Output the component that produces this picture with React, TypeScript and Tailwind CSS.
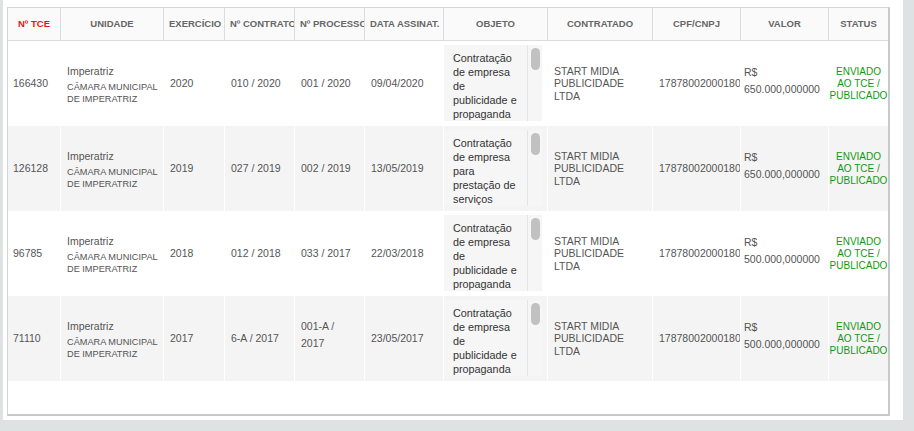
import React from "react";

const GRID =
  "grid grid-cols-[52px_103px_61px_70px_70px_79px_104px_105px_88px_88px_60px]";

const HEADERS = [
  "Nº TCE",
  "UNIDADE",
  "EXERCÍCIO",
  "Nº CONTRATO",
  "Nº PROCESSO",
  "DATA ASSINAT.",
  "OBJETO",
  "CONTRATADO",
  "CPF/CNPJ",
  "VALOR",
  "STATUS",
];

const ROWS = [
  {
    tce: "166430",
    ano: "2020",
    contrato: "010 / 2020",
    processo: "001 / 2020",
    data: "09/04/2020",
    objeto: "Contratação de empresa de publicidade e propaganda",
    valor: "R$ 650.000,000000",
  },
  {
    tce: "126128",
    ano: "2019",
    contrato: "027 / 2019",
    processo: "002 / 2019",
    data: "13/05/2019",
    objeto: "Contratação de empresa para prestação de serviços",
    valor: "R$ 650.000,000000",
  },
  {
    tce: "96785",
    ano: "2018",
    contrato: "012 / 2018",
    processo: "033 / 2017",
    data: "22/03/2018",
    objeto: "Contratação de empresa de publicidade e propaganda",
    valor: "R$ 500.000,000000",
  },
  {
    tce: "71110",
    ano: "2017",
    contrato: "6-A / 2017",
    processo: "001-A / 2017",
    data: "23/05/2017",
    objeto: "Contratação de empresa de publicidade e propaganda",
    valor: "R$ 500.000,000000",
  },
];

function Cell({ children, className = "" }: { children: React.ReactNode; className?: string }) {
  return (
    <div className={`flex items-center border-l border-white pl-[6px] pr-[4px] ${className}`}>
      {children}
    </div>
  );
}

export default function App() {
  return (
    <div
      className="flex h-[431px] w-[914px] bg-[#dee2e2] pb-[11px] pl-[3px] pr-[11px] text-[#555] antialiased"
      style={{ fontFamily: '"Liberation Sans", Arial, sans-serif' }}
    >
      <div className="flex-1 bg-white pl-[4px] pr-[13px] pt-[7px]">
        <div className="h-[409px] border-b-2 border-l border-r-2 border-t border-b-[#c9c9c9] border-l-[#d4d4d4] border-r-[#c9c9c9] border-t-[#d4d4d4]">
          {/* header */}
          <div className={`${GRID} h-[33px] border-b border-[#dcdcdc] bg-[#fafafa]`}>
            {HEADERS.map((h, i) => (
              <div
                key={h}
                className={[
                  "overflow-hidden whitespace-nowrap px-[5px] text-center text-[9.5px] font-bold leading-[32px]",
                  i === 0 ? "text-[#ee1111]" : "border-l border-[#dcdcdc] text-[#666]",
                ].join(" ")}
              >
                {h}
              </div>
            ))}
          </div>

          {/* rows */}
          {ROWS.map((r, i) => (
            <div
              key={r.tce}
              className={`${GRID} h-[85px] text-[10.5px] ${i % 2 === 1 ? "bg-[#f4f4f4]" : "bg-white"}`}
            >
              <div className="flex items-center pl-[5px]">{r.tce}</div>

              <Cell>
                <div>
                  <p className="leading-[17px]">Imperatriz</p>
                  <p className="mt-[1px] text-[9.2px] leading-[12px]">
                    CÂMARA MUNICIPAL
                    <br />
                    DE IMPERATRIZ
                  </p>
                </div>
              </Cell>

              <Cell>{r.ano}</Cell>
              <Cell>{r.contrato}</Cell>
              <Cell className={r.processo.length > 10 ? "pb-[8px] leading-[17px]" : "leading-[17px]"}>
                <span>{r.processo}</span>
              </Cell>
              <Cell>{r.data}</Cell>

              {/* objeto: scroll box */}
              <div className="border-l border-white pt-[4px]">
                <div className="flex h-[76px] w-[98px] bg-[#f6f6f6]">
                  <div className="w-[83px] overflow-hidden pl-[9px] pr-[6px] pt-[6px] text-[10.8px] leading-[14px] text-[#333]">
                    {r.objeto}
                  </div>
                  <div className="flex w-[15px] justify-center border-l border-[#e4e4e4] pt-[3px]">
                    <div className="h-[22px] w-[9px] rounded-full bg-[#c1c1c1]" />
                  </div>
                </div>
              </div>

              <Cell className="leading-[12.5px]">
                <span>START MIDIA PUBLICIDADE LTDA</span>
              </Cell>

              <div className="flex items-center overflow-hidden whitespace-nowrap border-l border-white pl-[6px]">
                17878002000180
              </div>

              <div className="flex items-center border-l border-white pb-[5px] pl-[3px] pr-[3px] leading-[17px]">
                <span>{r.valor}</span>
              </div>

              <div className="flex items-center justify-center border-l border-white text-center text-[10px] leading-[12px] text-[#119911]">
                <span>
                  ENVIADO
                  <br />
                  AO TCE /
                  <br />
                  PUBLICADO
                </span>
              </div>
            </div>
          ))}
        </div>
      </div>
    </div>
  );
}
